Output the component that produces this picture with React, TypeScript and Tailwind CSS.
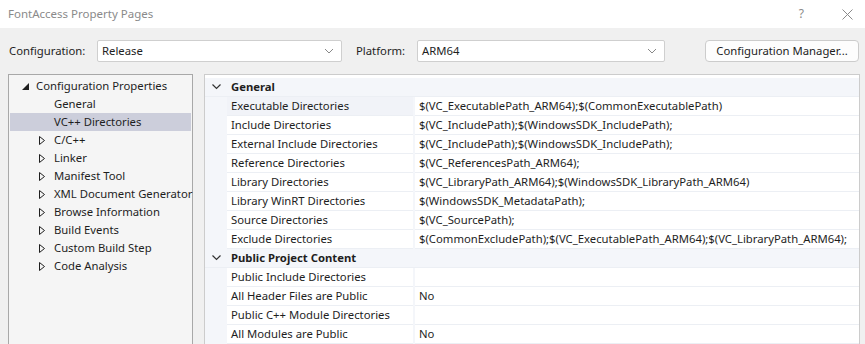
import React from "react";

const font = { fontFamily: '"Noto Sans", "Open Sans", sans-serif' };

function Chevron() {
  return (
    <svg width="10" height="6" viewBox="0 0 10 6" className="text-[#888]">
      <path d="M1 1 L5 5 L9 1" fill="none" stroke="currentColor" strokeWidth="1" />
    </svg>
  );
}

function OutlineTri() {
  return (
    <svg width="6" height="9" viewBox="0 0 6 9">
      <path d="M0.5 0.5 L5.5 4.5 L0.5 8.5 Z" fill="none" stroke="#1e1e1e" strokeWidth="1" />
    </svg>
  );
}

function FilledTri() {
  return (
    <svg width="7" height="7" viewBox="0 0 7 7">
      <path d="M7 0 L7 7 L0 7 Z" fill="#1e1e1e" />
    </svg>
  );
}

const treeItems: { label: string; kind: "leaf" | "collapsed"; selected?: boolean }[] = [
  { label: "General", kind: "leaf" },
  { label: "VC++ Directories", kind: "leaf", selected: true },
  { label: "C/C++", kind: "collapsed" },
  { label: "Linker", kind: "collapsed" },
  { label: "Manifest Tool", kind: "collapsed" },
  { label: "XML Document Generator", kind: "collapsed" },
  { label: "Browse Information", kind: "collapsed" },
  { label: "Build Events", kind: "collapsed" },
  { label: "Custom Build Step", kind: "collapsed" },
  { label: "Code Analysis", kind: "collapsed" },
];

const general: [string, string][] = [
  ["Executable Directories", "$(VC_ExecutablePath_ARM64);$(CommonExecutablePath)"],
  ["Include Directories", "$(VC_IncludePath);$(WindowsSDK_IncludePath);"],
  ["External Include Directories", "$(VC_IncludePath);$(WindowsSDK_IncludePath);"],
  ["Reference Directories", "$(VC_ReferencesPath_ARM64);"],
  ["Library Directories", "$(VC_LibraryPath_ARM64);$(WindowsSDK_LibraryPath_ARM64)"],
  ["Library WinRT Directories", "$(WindowsSDK_MetadataPath);"],
  ["Source Directories", "$(VC_SourcePath);"],
  ["Exclude Directories", "$(CommonExcludePath);$(VC_ExecutablePath_ARM64);$(VC_LibraryPath_ARM64);"],
];

const publicContent: [string, string][] = [
  ["Public Include Directories", ""],
  ["All Header Files are Public", "No"],
  ["Public C++ Module Directories", ""],
  ["All Modules are Public", "No"],
];

function Header({ title }: { title: string }) {
  return (
    <div className="flex h-[19px] items-center bg-[#f4f6fa] border-b border-[#eceff4]">
      <div className="w-[22px] shrink-0 flex justify-center">
        <svg width="9" height="6" viewBox="0 0 9 6">
          <path d="M0.5 0.5 L4.5 4.5 L8.5 0.5" fill="none" stroke="#333" strokeWidth="1.2" />
        </svg>
      </div>
      <span className="pl-[4px] font-bold text-[#1e1e1e] whitespace-nowrap">{title}</span>
    </div>
  );
}

function Row({ name, value, highlight }: { name: string; value: string; highlight?: boolean }) {
  return (
    <div className="flex h-[19px] bg-[#f4f6fa]">
      <div className="w-[22px] shrink-0" />
      <div
        className={`w-[186px] shrink-0 flex items-center pl-[4px] border-b border-[#eceff4] whitespace-nowrap ${
          highlight ? "bg-[#f1f3f8]" : "bg-white"
        }`}
      >
        {name}
      </div>
      <div className="w-[2px] shrink-0" />
      <div className="flex-1 flex items-center pl-[4px] bg-white border-b border-[#eceff4] whitespace-nowrap overflow-hidden">
        {value}
      </div>
    </div>
  );
}

export default function App() {
  return (
    <div
      className="w-[865px] h-[344px] overflow-hidden bg-[#f0f0f0] flex flex-col text-[11.3px] text-[#1e1e1e]"
      style={font}
    >
      {/* Title bar */}
      <div className="h-[28px] bg-white flex items-center pl-[8px] shrink-0">
        <span className="text-[#8a8a8a] text-[11.5px]">FontAccess Property Pages</span>
        <div className="flex-1" />
        <span className="text-[#8a8a8a] text-[12px] mr-[38px]">?</span>
        <svg width="11" height="11" viewBox="0 0 11 11" className="mr-[12px]">
          <path d="M0.5 0.5 L10.5 10.5 M10.5 0.5 L0.5 10.5" stroke="#8a8a8a" strokeWidth="1" />
        </svg>
      </div>

      {/* Toolbar */}
      <div className="h-[46px] flex items-center pl-[9px] shrink-0">
        <span className="w-[88px] shrink-0">Configuration:</span>
        <div className="w-[245px] shrink-0 h-[22px] bg-white border border-[#cfcfcf] rounded-[2px] flex items-center pl-[4px] pr-[7px]">
          <span className="flex-1">Release</span>
          <Chevron />
        </div>
        <span className="ml-[14px] w-[61px] shrink-0">Platform:</span>
        <div className="w-[248px] shrink-0 h-[22px] bg-white border border-[#cfcfcf] rounded-[2px] flex items-center pl-[4px] pr-[7px]">
          <span className="flex-1">ARM64</span>
          <Chevron />
        </div>
        <div className="flex-1" />
        <div className="w-[154px] shrink-0 h-[22px] mr-[6px] bg-[#fdfdfd] border border-[#cccccc] rounded-[4px] flex items-center justify-center">
          Configuration Manager...
        </div>
      </div>

      {/* Content */}
      <div className="flex-1 flex pl-[8px] gap-[11px] min-h-0">
        {/* Tree */}
        <div className="w-[185px] shrink-0 bg-[#f5f5f5] border border-b-0 border-[#a8a8a8] pt-[2px] px-[1px]">
          <div className="h-[18px] flex items-center">
            <div className="w-[26px] shrink-0 flex justify-end pr-[7px]">
              <FilledTri />
            </div>
            <span className="whitespace-nowrap">Configuration Properties</span>
          </div>
          {treeItems.map((it) => (
            <div
              key={it.label}
              className={`h-[18px] flex items-center ${it.selected ? "bg-[#cccedb]" : ""}`}
            >
              <div className="w-[44px] shrink-0 flex justify-end pr-[9px]">
                {it.kind === "collapsed" ? <OutlineTri /> : null}
              </div>
              <span className="whitespace-nowrap">{it.label}</span>
            </div>
          ))}
        </div>

        {/* Property grid */}
        <div className="w-[656px] shrink-0 bg-white border border-b-0 border-[#cccccc] pt-[3px]">
          <Header title="General" />
          {general.map(([n, v], i) => (
            <Row key={n} name={n} value={v} highlight={i === 0} />
          ))}
          <Header title="Public Project Content" />
          {publicContent.map(([n, v]) => (
            <Row key={n} name={n} value={v} />
          ))}
        </div>
      </div>
    </div>
  );
}
